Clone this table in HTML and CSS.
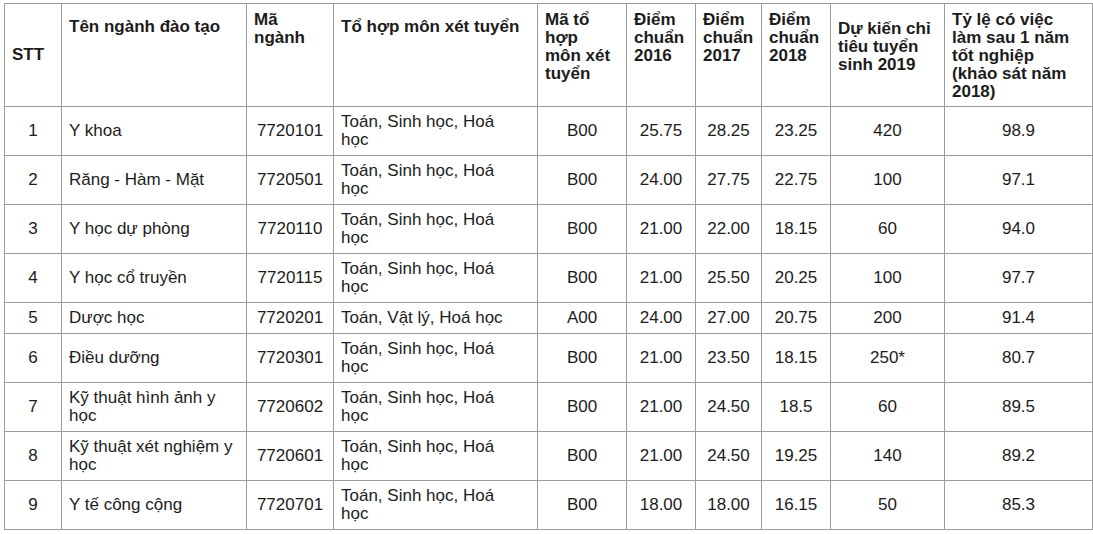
FILE: index.html
```html
<!DOCTYPE html>
<html lang="vi">
<head>
<meta charset="utf-8">
<title>Điểm chuẩn</title>
<link rel="stylesheet" href="styles.css">
</head>
<body>
<table class="score-table">
  <colgroup>
    <col class="c-stt">
    <col class="c-name">
    <col class="c-code">
    <col class="c-combo">
    <col class="c-combo-code">
    <col class="c-y16">
    <col class="c-y17">
    <col class="c-y18">
    <col class="c-quota">
    <col class="c-rate">
  </colgroup>
  <thead>
    <tr>
      <th class="th-mid">STT</th>
      <th class="th-low">Tên ngành đào tạo</th>
      <th>Mã ngành</th>
      <th class="th-low">Tổ hợp môn xét tuyển</th>
      <th>Mã tổ hợp môn xét tuyển</th>
      <th>Điểm chuẩn 2016</th>
      <th>Điểm chuẩn 2017</th>
      <th>Điểm chuẩn 2018</th>
      <th class="th-lower">Dự kiến chỉ tiêu tuyển sinh 2019</th>
      <th>Tỷ lệ có việc làm sau 1 năm tốt nghiệp (khảo sát năm 2018)</th>
    </tr>
  </thead>
  <tbody>
    <tr>
      <td>1</td><td class="txt">Y khoa</td><td>7720101</td><td class="txt">Toán, Sinh học, Hoá học</td><td>B00</td><td>25.75</td><td>28.25</td><td>23.25</td><td>420</td><td>98.9</td>
    </tr>
    <tr>
      <td>2</td><td class="txt">Răng - Hàm - Mặt</td><td>7720501</td><td class="txt">Toán, Sinh học, Hoá học</td><td>B00</td><td>24.00</td><td>27.75</td><td>22.75</td><td>100</td><td>97.1</td>
    </tr>
    <tr>
      <td>3</td><td class="txt">Y học dự phòng</td><td>7720110</td><td class="txt">Toán, Sinh học, Hoá học</td><td>B00</td><td>21.00</td><td>22.00</td><td>18.15</td><td>60</td><td>94.0</td>
    </tr>
    <tr>
      <td>4</td><td class="txt">Y học cổ truyền</td><td>7720115</td><td class="txt">Toán, Sinh học, Hoá học</td><td>B00</td><td>21.00</td><td>25.50</td><td>20.25</td><td>100</td><td>97.7</td>
    </tr>
    <tr>
      <td>5</td><td class="txt">Dược học</td><td>7720201</td><td class="txt">Toán, Vật lý, Hoá học</td><td>A00</td><td>24.00</td><td>27.00</td><td>20.75</td><td>200</td><td>91.4</td>
    </tr>
    <tr>
      <td>6</td><td class="txt">Điều dưỡng</td><td>7720301</td><td class="txt">Toán, Sinh học, Hoá học</td><td>B00</td><td>21.00</td><td>23.50</td><td>18.15</td><td>250*</td><td>80.7</td>
    </tr>
    <tr>
      <td>7</td><td class="txt">Kỹ thuật hình ảnh y học</td><td>7720602</td><td class="txt">Toán, Sinh học, Hoá học</td><td>B00</td><td>21.00</td><td>24.50</td><td>18.5</td><td>60</td><td>89.5</td>
    </tr>
    <tr>
      <td>8</td><td class="txt">Kỹ thuật xét nghiệm y học</td><td>7720601</td><td class="txt">Toán, Sinh học, Hoá học</td><td>B00</td><td>21.00</td><td>24.50</td><td>19.25</td><td>140</td><td>89.2</td>
    </tr>
    <tr>
      <td>9</td><td class="txt">Y tế công cộng</td><td>7720701</td><td class="txt">Toán, Sinh học, Hoá học</td><td>B00</td><td>18.00</td><td>18.00</td><td>16.15</td><td>50</td><td>85.3</td>
    </tr>
  </tbody>
</table>
</body>
</html>
```

FILE: styles.css
```css
html, body {
  background: #ffffff;
}

body {
  margin: 3px 0 0 4px;
  font-family: "Liberation Sans", Arial, sans-serif;
  font-size: 17px;
  line-height: 18px;
  color: #1c1c1c;
}

.score-table {
  border-collapse: collapse;
  table-layout: fixed;
  width: 1088px;
}

.c-stt { width: 57px; }
.c-name { width: 185px; }
.c-code { width: 87px; }
.c-combo { width: 204px; }
.c-combo-code { width: 89px; }
.c-y16 { width: 69px; }
.c-y17 { width: 66px; }
.c-y18 { width: 69px; }
.c-quota { width: 114px; }
.c-rate { width: 148px; }

.score-table th,
.score-table td {
  border: 1px solid #9c9c9c;
}

.score-table th {
  font-weight: bold;
  text-align: left;
  vertical-align: top;
  padding: 7px 11px 5px 7px;
}

.score-table th.th-mid {
  vertical-align: middle;
  padding-top: 6px;
  padding-bottom: 6px;
}

.score-table th.th-low {
  padding-top: 14px;
}

.score-table th.th-lower {
  padding-top: 16px;
}

.score-table td {
  text-align: center;
  vertical-align: middle;
  padding: 6px 7px;
}

.score-table td.txt {
  text-align: left;
  padding-right: 11px;
}
```
